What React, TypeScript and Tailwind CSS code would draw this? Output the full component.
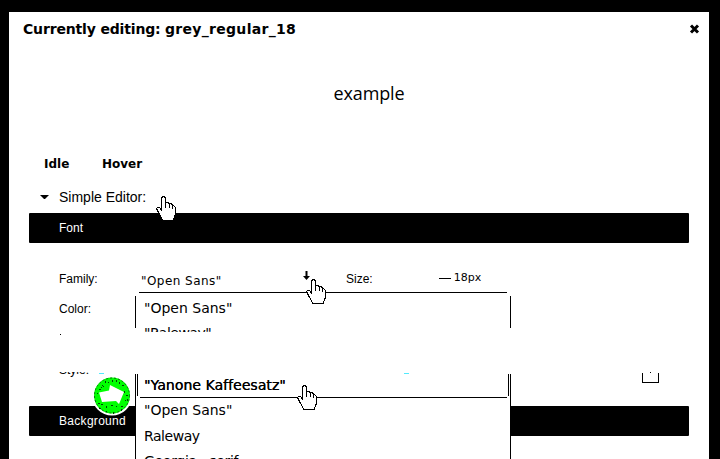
import type { ReactNode } from "react";

const verdana = "font-['Verdana','DejaVu_Sans',sans-serif]";
const arial = "font-['Liberation_Sans',Arial,sans-serif]";

function HandCursor({ className }: { className: string }) {
  return (
    <svg className={`absolute z-30 ${className}`} width="20" height="26" viewBox="0 0 20 26" shapeRendering="crispEdges">
      <path
        d="M5.5 14.5 V2.5 L6.5 .5 H8.5 L9.5 2.5 V7.5 L10.5 6.5 H12.5 L13.5 8.5 L14.5 7.5 L16.5 8.5 V10.5 L17.5 9.5 L19.5 11.5 V18.5 L18.5 20.5 L17.5 24.5 H6.5 L5.5 21.5 L3.5 18.5 L1.5 14.5 L.5 12.5 L1.5 11.5 H3.5 L5.5 14.5 Z"
        fill="white"
        stroke="black"
      />
      <path d="M9.5 6 V12 M13.5 8 V12 M16.5 9 V13" stroke="black" fill="none" />
    </svg>
  );
}

function NextBadge() {
  return (
    <svg className="absolute left-[92px] top-[375px] z-10" width="40" height="41" viewBox="0 0 40 41">
      <circle cx="20" cy="20.5" r="20" fill="white" />
      <circle cx="20" cy="20.5" r="18" fill="#00ff00" />
      <circle cx="20" cy="20.5" r="17.5" fill="none" stroke="#06720d" strokeWidth="1" strokeDasharray="2 2" />
      <path
        d="M13 6l1 2m6-3l1 2m6 0l1 2m-19 3l1 1m22 3l1 2m-28 0l1 1m30 5l-1 2m-29 2l2 1m-1 4l2 1m5 3l1-1m6 3l1-2m7-1l1-2M10 10l2 2M16 7l1 1M24 5l1 2M30 10l2 1M7 14l2 1M9 29l2 1M14 31l1 2M19 30l2 1M24 32l1-1M29 31l2 1M33 25l1 1M34 20l2 1"
        stroke="#003f05"
        strokeWidth="1"
        shapeRendering="crispEdges"
      />
      <path d="M7 17.5 L17 15.5 L18 10 L32 17 L27 29 L24 26 L10 27 Z" fill="white" />
    </svg>
  );
}

function SectionBar({ children }: { children: ReactNode }) {
  return (
    <div className={`mx-5 flex h-[30px] shrink-0 items-center rounded-[1px] bg-black pl-[30px] text-[12px] text-white ${arial}`}>
      {children}
    </div>
  );
}

export default function App() {
  return (
    <div className={`relative h-[459px] w-[720px] overflow-hidden bg-black pl-[9px] pt-3 text-black ${verdana}`}>
      <main className="flex h-[447px] w-[700px] flex-col bg-white">
        <header className="flex h-[34px] shrink-0 items-center justify-between pl-[14px] pr-[9px]">
          <h1 className="flex text-[14px] font-bold">
            <span className="w-[142px] whitespace-pre tracking-[-0.16px]">Currently editing: </span>
            <span className="tracking-[0.3px]">grey_regular_18</span>
          </h1>
          <button aria-label="Close">
            <svg width="11" height="10" viewBox="0 0 11 10">
              <path d="M2 1.5l7 7M9 1.5l-7 7" stroke="black" strokeWidth="3" />
            </svg>
          </button>
        </header>

        <div className="flex h-[90px] shrink-0 items-center justify-center pl-[20px] font-['Open_Sans',sans-serif] text-[18px]">
          <span className="pt-[4px] tracking-[-0.1px]">example</span>
        </div>

        <nav className="flex h-[50px] shrink-0 items-center pl-[35px] pt-[5px] text-[12px] font-bold">
          <span className="w-[58px]">Idle</span>
          <span>Hover</span>
        </nav>

        <div className={`flex h-[27px] shrink-0 items-center pb-[4px] pl-[31px] text-[14px] ${arial}`}>
          <svg width="9" height="5" viewBox="0 0 9 5">
            <path d="M0 0h9L5 4H4z" />
          </svg>
          <span className="pl-[10px]">Simple Editor:</span>
        </div>

        <SectionBar>Font</SectionBar>

        <div className={`flex h-[50px] shrink-0 items-end pl-[50px] text-[12px] ${arial}`}>
          <span className="flex h-[28px] w-[80px] items-center">Family:</span>
          <div className={`flex h-[30px] w-[368px] justify-between border-b border-black pl-[2px] ${verdana}`}>
            <span className="pt-[9px] text-[12px] leading-[18px] tracking-[0.45px]">"Open Sans"</span>
            <div className="flex w-[204px]">
              <svg className="mt-[8px]" width="7" height="9" viewBox="0 0 7 9">
                <path d="M2.5 0h2v5H7L3.5 9 0 5h2.5z" />
              </svg>
              <span className={`pl-[36px] pt-[7px] leading-[18px] ${arial}`}>Size:</span>
              <span className="ml-[66px] mt-[15px] h-px w-[12px] bg-black" />
              <span className="pl-[3px] pt-[6px] text-[11px] leading-[18px]">18px</span>
            </div>
          </div>
        </div>

        <div className="flex h-[39px] shrink-0 pl-[50px]">
          <span className={`w-[76px] pt-[7px] text-[12px] leading-[18px] ${arial}`}>Color:</span>
          <div className="mt-[3px] h-[36px] w-[376px] overflow-hidden">
            <div className="h-[32px] border-x border-black pl-[8px] text-[14px]">
              <div className="h-[25px] leading-[25px]">"Open Sans"</div>
              <div className="h-[25px] leading-[25px] tracking-[-0.5px]">"Raleway"</div>
            </div>
          </div>
        </div>

        <div className="flex h-[42px] shrink-0 items-start pl-[50px]">
          <span className="ml-px mt-[2px] h-px w-px bg-black" />
        </div>

        <div className="flex h-[32px] shrink-0 justify-between pl-[50px] pr-[50px]">
          <div className="flex">
            <div className={`-mt-[2px] h-[10px] w-[40px] overflow-hidden text-[12px] ${arial}`}>
              <span className="-mt-[11px] block leading-[18px]">Style:</span>
            </div>
            <span className="mt-[-1px] h-px w-[5px] bg-cyan-300" />
          </div>
          <div className="-mt-[2px] flex h-[11px] w-[17px] justify-center border-b border-black bg-[linear-gradient(black,black),linear-gradient(black,black)] bg-[length:1px_9px] bg-[position:left_bottom,right_bottom] bg-no-repeat">
            <span className="h-px w-px bg-black" />
          </div>
        </div>

        <SectionBar>
          <span className="tracking-[0.3px]">Background</span>
        </SectionBar>
      </main>

      <NextBadge />

      <div className="absolute left-[135px] top-[374px] h-[85px] w-[376px] overflow-hidden border-x border-black bg-white text-[14px]">
        <div className="mx-px h-[22px] border-x border-black pl-[6px] leading-[22px] tracking-[0.05px] [text-shadow:0.3px_0_0_black]">"Yanone Kaffeesatz"</div>
        <div className="ml-[4px] mt-px h-px w-[367px] bg-black" />
        <div className="flex flex-col pl-[8px]">
          <span className="h-[25px] leading-[25px]">"Open Sans"</span>
          <span className="h-[26px] leading-[26px] tracking-[-0.45px]">Raleway</span>
          <span className="h-[25px] leading-[25px] tracking-[-0.3px]">Georgia , serif</span>
        </div>
      </div>
      <span className="absolute left-[404px] top-[373px] h-px w-[5px] bg-cyan-300" />

      <HandCursor className="left-[156px] top-[196px]" />
      <HandCursor className="left-[306px] top-[279px]" />
      <HandCursor className="left-[297px] top-[385px]" />
    </div>
  );
}
